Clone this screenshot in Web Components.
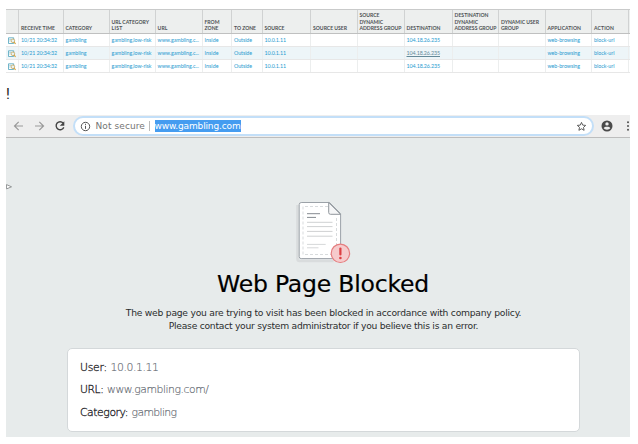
<!DOCTYPE html>
<html lang="en">
<head>
<meta charset="utf-8">
<title>Web Page Blocked</title>
<style>
body{margin:0;background:#fff;width:638px;height:444px;overflow:hidden;font-family:"DejaVu Sans",sans-serif}
</style>
</head>
<body>
<policy-report></policy-report>
<script>
/* Text that is tracked to an exact width given by its w attribute. */
class FitText extends HTMLElement{
  connectedCallback(){
    if(this.shadowRoot)return;
    const root=this.attachShadow({mode:'open'});
    root.innerHTML='<style>:host{display:inline-block;white-space:pre}</style><slot></slot>';
    const w=parseFloat(this.getAttribute('w'));
    const n=this.textContent.length;
    const natural=this.getBoundingClientRect().width;
    if(w&&natural)this.style.letterSpacing=((w-natural)/n)+'px';
  }
}

class TrafficLog extends HTMLElement{
  connectedCallback(){
    const heads=[[],[['RECEIVE TIME',34]],[['CATEGORY',26.5]],[['URL CATEGORY',37.5],['LIST',11]],[['URL',10]],[['FROM',15],['ZONE',14]],[['TO ZONE',22]],[['SOURCE',20]],[['SOURCE USER',34]],[['SOURCE',20],['DYNAMIC',23.5],['ADDRESS GROUP',42]],[['DESTINATION',34]],[['DESTINATION',34],['DYNAMIC',23.5],['ADDRESS GROUP',42]],[['DYNAMIC USER',38],['GROUP',17.5]],[['APPLICATION',33.5]],[['ACTION',20]],[]];
    const vals=[[],['10/21 20:34:32',36],['gambling',21],['gambling,low-risk',40],['www.gambling.c...',41.5],['Inside',14],['Outside',18],['10.0.1.11',21.5],[],[],['104.18.26.235',33.5],[],[],['web-browsing',32.5],['block-url',20.5],[]];
    const icon='<svg width="8" height="8" viewBox="0 0 8 8"><path d="M.5.8h5.2v5.7H.5z" fill="#fff" stroke="#4ea3bd" stroke-width=".8"/><path d="M1.3 2.4h2M1.3 4h1.2" stroke="#67a7b9" stroke-width=".6"/><circle cx="4.9" cy="3.8" r="1.8" fill="#e8f3f6" stroke="#c6a455" stroke-width=".8"/><path d="m6 5.2 1.6 1.7" stroke="#d4a544" stroke-width="1.2"/></svg>';
    const row=k=>`<div class="row r${k}">${vals.map((v,i)=>`<span class="c">${i===0?icon:v[0]?`<fit-text w="${v[1]}">${v[0]}</fit-text>`:''}</span>`).join('')}</div>`;
    this.attachShadow({mode:'open'}).innerHTML=`<style>
    :host{display:block;width:624px;height:64px;font-family:Lato,sans-serif}
    .row{box-sizing:border-box;display:grid;grid-template-columns:13px 44.5px 46px 46px 47px 29.5px 30.5px 48.5px 46.5px 47px 48px 46.5px 46.5px 46.5px 37px 1px;height:13px;border-bottom:1px solid #e7e7e7;font-size:5.35px;color:#289bd0}
    .c{box-sizing:border-box;display:flex;align-items:center;border-right:1px solid #eceeee;padding:0 0 1px 2px;min-width:0}
    .c:first-child{padding:1px 0 0 1.5px}
    .c:last-child{border:0;padding:0}
    .head{height:25px;background:#edefee;border-top:1px solid #c9caca;border-bottom:1px solid #bfc0c0;font-size:5.1px;font-weight:700;line-height:6.25px;color:#4f5355}
    .head .c{flex-direction:column;align-items:flex-start;justify-content:flex-end;border-color:#d0d2d2;padding-bottom:1.8px}
    .r1{background:#edf5f8}
    .r1 .c:nth-child(11){color:#648998}
    .r1 .c:nth-child(11) fit-text{text-decoration:underline}
    svg{display:block}
    </style><div class="row head">${heads.map(h=>`<span class="c">${h.map(t=>`<fit-text w="${t[1]}">${t[0]}</fit-text>`).join('')}</span>`).join('')}</div>${row(0)}${row(1)}${row(2)}`;
  }
}

class BrowserBar extends HTMLElement{
  connectedCallback(){
    this.attachShadow({mode:'open'}).innerHTML=`<style>
    :host{box-sizing:border-box;display:flex;align-items:center;width:624px;height:23px;background:#eee;border-bottom:1px solid #bdbdbd;padding-left:6px;color:#757575}
    svg{display:block;flex:none}
    .field{box-sizing:border-box;display:flex;align-items:center;width:522px;height:20px;margin-left:6px;border:2px solid #c3dff8;border-radius:10px;background:#fff;padding-left:5px;font-size:9px;line-height:12px}
    .note{margin-left:4.5px}
    .bar{width:1px;height:10px;background:#bbb;margin:0 5px 0 3.5px}
    .sel{background:#459cf0;color:#fff;height:12px;line-height:12px;width:86px}
    .star{margin-left:auto;margin-right:5px}
    </style>
    <svg width="14" height="14" viewBox="0 0 14 14" fill="none" stroke="#999" stroke-width="1.2"><path d="M11 7H2.6M6.7 2.8 2.5 7l4.2 4.2"/></svg>
    <svg style="margin-left:6px" width="14" height="14" viewBox="0 0 14 14" fill="none" stroke="#999" stroke-width="1.2"><path d="M3 7h8.4M7.3 2.8 11.5 7l-4.2 4.2"/></svg>
    <svg style="margin-left:7px" width="14" height="14" viewBox="0 0 14 14"><path d="M10.2 4.1A4 4 0 1 0 10.8 8.4" fill="none" stroke="#444" stroke-width="1.4"/><path d="M11.3 2.2v4.5H6.8z" fill="#444"/></svg>
    <div class="field">
      <svg width="11" height="11" viewBox="0 0 11 11"><circle cx="5.5" cy="5.5" r="4.2" fill="none" stroke="#555" stroke-width="1"/><path d="M5.5 4.8v3.1M5.5 2.8v1.1" stroke="#555" stroke-width="1"/></svg>
      <fit-text class="note" w="49.5">Not secure</fit-text><span class="bar"></span><span class="sel"><fit-text w="86">www.gambling.com</fit-text></span>
      <svg class="star" width="11" height="11" viewBox="0 0 11 11"><path d="m5.5 1.4 1.2 2.7 3 .3-2.2 2 .6 2.9-2.6-1.5-2.6 1.5.6-2.9-2.2-2 3-.3z" fill="none" stroke="#555" stroke-width=".95"/></svg>
    </div>
    <svg style="margin-left:7px" width="12" height="12" viewBox="0 0 12 12"><circle cx="6" cy="6" r="5.5" fill="#4b4b4b"/><circle cx="6" cy="3.9" r="1.7" fill="#eee"/><path d="M2.7 8.2C3.5 6.3 8.5 6.3 9.3 8.2 8 10.1 4 10.1 2.7 8.2" fill="#eee"/></svg>
    <svg style="margin-left:13px" width="4" height="12" viewBox="0 0 4 12" fill="#505050"><circle cx="2" cy="2.3" r="1"/><circle cx="2" cy="6" r="1"/><circle cx="2" cy="9.7" r="1"/></svg>`;
  }
}

class BlockedDocument extends HTMLElement{
  connectedCallback(){
    this.attachShadow({mode:'open'}).innerHTML=`<style>:host{display:block;width:56px;height:64px}svg{display:block}</style>
    <svg width="56" height="64" viewBox="0 0 56 64" fill="none">
    <path d="M1.5 5v54q0 2 2 2h34" stroke="#d9dcdd" stroke-width="2.5"/>
    <path d="M5.2 2.5h28.3L44.6 13.6v43q0 2-2 2H5.2q-2 0-2-2v-52q0-2 2-2z" fill="#fff" stroke="#9ca2a8"/>
    <path d="M32 6.5H7v48h33.5V16" stroke="#d8dbdd" stroke-dasharray="3 2"/>
    <path d="M32.7 2.5v10q0 1.8 1.8 1.8h10z" fill="#f5f6f7" stroke="#8f959b"/>
    <path d="M11 13.7h13M11 17.4h9" stroke="#858a90"/>
    <path d="M11 22.3h25.5M11 26.6h25.5M11 31.4h25.5M11 36.2h25.5" stroke="#cfd1d2"/>
    <path d="M11 44.4h18.7M11 47.8h11.5" stroke="#d6d8d9"/>
    <circle cx="44.4" cy="53.3" r="9.2" fill="#f6cbcc" stroke="#e57d7f" stroke-width="1.2"/>
    <path d="M44.4 48.5v6" stroke="#dc3f42" stroke-width="2.2" stroke-linecap="round"/><circle cx="44.4" cy="58" r="1.3" fill="#dc3f42"/></svg>`;
  }
}

class RequestDetails extends HTMLElement{
  connectedCallback(){
    this.attachShadow({mode:'open'}).innerHTML=`<style>
    :host{box-sizing:border-box;display:flex;flex-direction:column;width:513px;height:84px;border:1px solid #d4d8da;border-radius:5px;background:#fff;padding:8px 0 0 12.5px;font-size:10.8px;font-weight:200;color:#5f676f;-webkit-text-stroke:.15px currentColor}
    div{height:22.5px;line-height:22.5px;white-space:nowrap;display:flex}
    b{font-weight:200;color:#1f2327;margin-right:3.5px;-webkit-text-stroke:.3px currentColor}
    </style>
    <div><b><fit-text w="27">User:</fit-text></b><fit-text w="48">10.0.1.11</fit-text></div>
    <div><b><fit-text w="23.5">URL:</fit-text></b><fit-text w="101.5">www.gambling.com/</fit-text></div>
    <div><b><fit-text w="48">Category:</fit-text></b><fit-text w="45">gambling</fit-text></div>`;
  }
}

class BlockedPage extends HTMLElement{
  connectedCallback(){
    this.attachShadow({mode:'open'}).innerHTML=`<style>
    :host{box-sizing:border-box;position:relative;display:flex;flex-direction:column;align-items:center;width:624px;height:299px;background:#e7ebeb;padding-top:62px}
    blocked-document{margin-left:12px}
    h1{font-size:23.5px;line-height:30px;font-weight:400;margin:4.5px 0 0 10px;color:#000;-webkit-text-stroke:.2px #000}
    .msg{margin:8.5px 0 0 11px;text-align:center;font-size:9.2px;line-height:12.8px;color:#2b2d2e;display:flex;flex-direction:column;align-items:center}
    request-details{margin:15.4px 0 0 10px}
    .cursor{position:absolute;left:0;top:45px}
    </style>
    <svg class="cursor" width="7" height="8" viewBox="0 0 7 8"><path d="M.5 1.6 5.5 3.8.6 5.9z" fill="#fff" stroke="#7c8082" stroke-width=".8"/></svg>
    <blocked-document></blocked-document>
    <h1><fit-text w="212">Web Page Blocked</fit-text></h1>
    <div class="msg"><fit-text w="395.5">The web page you are trying to visit has been blocked in accordance with company policy.</fit-text><fit-text w="309.5">Please contact your system administrator if you believe this is an error.</fit-text></div>
    <request-details></request-details>`;
  }
}

class PolicyReport extends HTMLElement{
  connectedCallback(){
    this.attachShadow({mode:'open'}).innerHTML=`<style>
    :host{box-sizing:border-box;display:flex;flex-direction:column;width:638px;height:444px;padding:9px 0 0 6px}
    p{margin:11px 0 0;height:31px;font:15px/20px Roboto,sans-serif;color:#222}
    </style><traffic-log></traffic-log><p>!</p><browser-bar></browser-bar><blocked-page></blocked-page>`;
  }
}
customElements.define('fit-text',FitText);
customElements.define('traffic-log',TrafficLog);
customElements.define('browser-bar',BrowserBar);
customElements.define('blocked-document',BlockedDocument);
customElements.define('request-details',RequestDetails);
customElements.define('blocked-page',BlockedPage);
customElements.define('policy-report',PolicyReport);
</script>
</body>
</html>
